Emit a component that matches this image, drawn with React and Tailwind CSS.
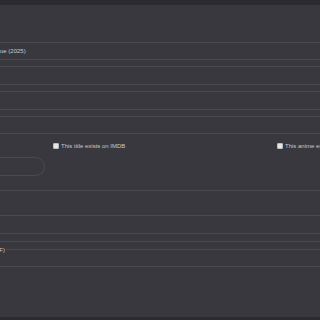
export default function App() {
  const line = "border-[#4a4a50]";
  return (
    <div
      className="w-[320px] h-[320px] overflow-hidden bg-[#39383e] flex flex-col text-[#c9c9cc]"
      style={{ fontFamily: '"Liberation Sans", Arial, sans-serif' }}
    >
      <div className="h-[5px] shrink-0 bg-[#2b2a30]" />
      <div className="flex flex-col -ml-[40px] w-[400px] pt-[37px]">
        <div className={`h-[18px] border-y ${line} flex items-center pl-[40px] text-[6px] leading-none`}>
          <span>ue (2025)</span>
        </div>
        <div className={`mt-[6px] h-[19px] border-y ${line}`} />
        <div className={`mt-[6px] h-[19px] border-y ${line}`} />
        <div className={`mt-[6px] h-[18px] border-y ${line}`} />
        <div className="h-[23px] flex items-center text-[6px] leading-none whitespace-nowrap">
          <div className="ml-[93px] w-[224px] shrink-0 flex items-center gap-[2px]">
            <span className="w-[6px] h-[6px] shrink-0 bg-[#e6e6e8] border border-[#bdbdc0] rounded-[1px]" />
            <span>This title exists on IMDB</span>
          </div>
          <div className="shrink-0 flex items-center gap-[2px]">
            <span className="w-[6px] h-[6px] shrink-0 bg-[#e6e6e8] border border-[#bdbdc0] rounded-[1px]" />
            <span>This anime exists on MyAnimeList</span>
          </div>
        </div>
        <div className={`h-[19px] w-[85px] border ${line} rounded-full`} />
        <div className={`mt-[14px] h-[26px] border-y ${line}`} />
        <div className={`mt-[17px] h-[9px] border-y ${line}`} />
        <div className="mt-[7px] flex items-center h-[1px] pl-[29px] text-[6px] leading-none whitespace-nowrap">
          <span className="pr-[1px]">(PDF)</span>
          <div className={`flex-1 border-t ${line}`} />
        </div>
        <div className={`h-[17px] border-b ${line}`} />
      </div>
      <div className="flex-1" />
      <div className="h-[3px] shrink-0 bg-[#2b2a30]" />
    </div>
  );
}
